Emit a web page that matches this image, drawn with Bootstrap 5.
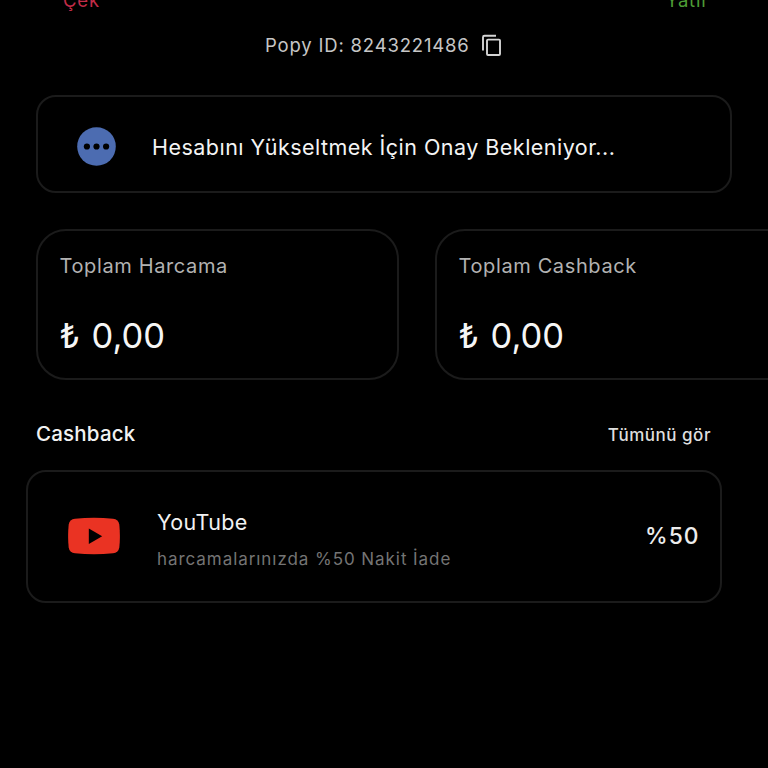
<!DOCTYPE html>
<html lang="tr" data-bs-theme="dark">
<head>
<meta charset="utf-8">
<meta name="viewport" content="width=device-width, initial-scale=1">
<title>Popy</title>
<link href="https://cdn.jsdelivr.net/npm/bootstrap@5.3.0/dist/css/bootstrap.min.css" rel="stylesheet">
<style>
body{background:#000;font-family:Inter,"Liberation Sans",sans-serif;height:768px;overflow:hidden;white-space:nowrap}
.actions{height:28px;margin-top:-14px;line-height:28px;font-size:18.5px;letter-spacing:.8px;padding:0 59px 0 63px}
.cek{color:#c22c48}
.yatir{color:#4d9c35}
.popy-id{height:30px;margin-top:16px;line-height:30px;font-size:18.5px;letter-spacing:.82px;color:#c6c6c6;padding-left:265px}
.popy-id svg{margin-left:11px}
.panel{background:#000;border:2px solid #1b1b1b}
.notice{height:98px;margin:35px 36px 0;border-radius:20px;padding:4px 0 0 39px;font-size:21.5px;letter-spacing:.47px;color:#f4f4f4}
.notice span{margin-left:36px;padding-top:3px}
.totals{margin:36px 0 0 36px;gap:36px}
.total{flex:0 0 363px;height:151px;border-radius:30px;padding:20px 21.5px 0}
.total-name{font-size:20px;line-height:30px;letter-spacing:.62px;color:#b2b2b2}
.total-sum{font-size:34.5px;line-height:44px;margin-top:33px;word-spacing:1.8px;color:#f6f6f6}
.section-head{height:36px;margin:36px 57px 0 36px}
.section-title{font-size:20.5px;line-height:36px;font-weight:500;letter-spacing:.2px;color:#f2f2f2}
.see-all{font-size:17px;line-height:36px;font-weight:500;letter-spacing:.52px;color:#dedede;padding-top:1px}
.offer{height:133px;margin:18px 46px 0 26px;border-radius:20px;padding:0 20.5px 0 40px}
.offer svg{margin-bottom:2px}
.offer-text{margin-left:37px;padding-top:8px}
.offer-name{font-size:21.5px;line-height:36px;color:#f2f2f2;letter-spacing:.36px}
.offer-note{font-size:17px;line-height:36px;margin-top:1px;color:#747474;letter-spacing:.94px}
.offer-rate{font-size:22.8px;font-weight:500;color:#ededed;letter-spacing:1px}
</style>
<script src="https://cdn.jsdelivr.net/npm/bootstrap@5.3.0/dist/js/bootstrap.bundle.min.js"></script>
</head>
<body>
<div class="overflow-hidden">
<div class="actions d-flex justify-content-between"><span class="cek">Çek</span><span class="yatir">Yatır</span></div>
</div>
<div class="popy-id d-flex align-items-center"><span>Popy ID: 8243221486</span>
<svg width="22" height="24" viewBox="0 0 22 24" fill="none" stroke="#d4d4d4" stroke-width="1.9"><path d="M2 17.6V4.2Q2 2.7 3.5 2.7H15"/><rect x="6" y="6.6" width="13" height="15.4" rx="1"/></svg></div>
<main>
<section class="panel notice d-flex align-items-center">
<svg width="39" height="39" viewBox="0 0 39 39"><circle cx="19.5" cy="19.5" r="19.3" fill="#4c6cb1"/><g fill="#000"><circle cx="9.9" cy="19.5" r="3.1"/><circle cx="19.5" cy="19.5" r="3.1"/><circle cx="29.1" cy="19.5" r="3.1"/></g></svg>
<span>Hesabını Yükseltmek İçin Onay Bekleniyor...</span>
</section>
<section class="totals d-flex">
<div class="panel total"><div class="total-name">Toplam Harcama</div><div class="total-sum">₺ 0,00</div></div>
<div class="panel total"><div class="total-name">Toplam Cashback</div><div class="total-sum">₺ 0,00</div></div>
</section>
<div class="section-head d-flex justify-content-between"><h2 class="section-title m-0">Cashback</h2><span class="see-all">Tümünü gör</span></div>
<section class="panel offer d-flex align-items-center">
<svg width="52" height="38" viewBox="0 0 52 38"><path fill="#ea3323" d="M7 1.7Q26-.1 45 1.7Q50.5 2.4 51.3 7.5Q52.5 19 51.3 30.5Q50.5 35.6 45 36.3Q26 38.1 7 36.3Q1.5 35.6.7 30.5Q-.5 19 .7 7.5Q1.5 2.4 7 1.7Z"/><path d="M20.8 11.5V27L34.2 19.2Z"/></svg>
<div class="offer-text"><div class="offer-name">YouTube</div><div class="offer-note">harcamalarınızda %50 Nakit İade</div></div>
<div class="offer-rate ms-auto">%50</div>
</section>
</main>
</body>
</html>
